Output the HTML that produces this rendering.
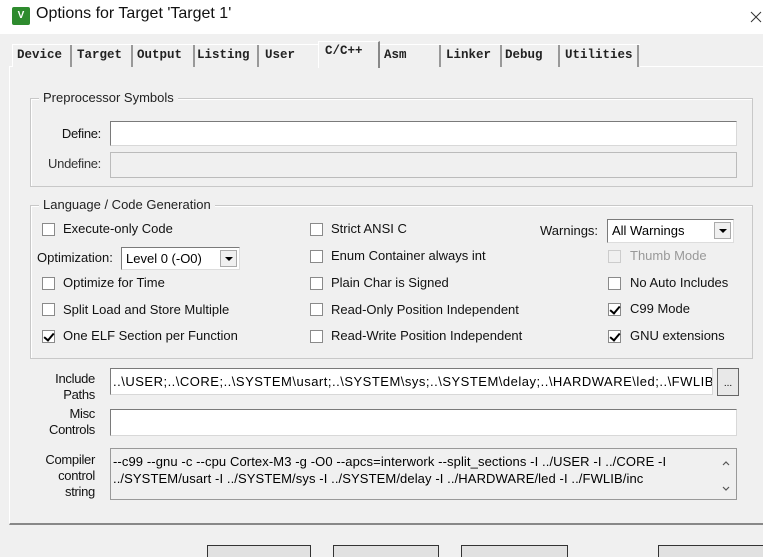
<!DOCTYPE html>
<html><head><style>
*{box-sizing:border-box;margin:0;padding:0}
body{width:763px;height:553px;background:#f0f0f0;position:relative;overflow:hidden;font-family:"Liberation Sans",Arial,sans-serif;font-size:13px;color:#000}
.a{position:absolute}
.tab{position:absolute;top:45px;height:22px;font-family:"Liberation Mono",monospace;font-size:12.5px;font-weight:bold;color:#222;padding-top:3px;border-right:2px solid #999}
.grp{position:absolute;border:1px solid #c8c8c8;box-shadow:inset 1px 1px 0 #fff}
.gl{position:absolute;background:#f0f0f0;padding:0 4px;top:-9px;left:8px;font-size:13px;color:#222}
.in{position:absolute;background:#fff;border:1px solid #7a7a7a;border-right-color:#d8d8d8;border-bottom-color:#d8d8d8}
.cb{position:absolute;width:13px;height:13px;background:#fff;border:1px solid #8a8a8a}
.cb.k::after{content:"";position:absolute;left:3px;top:0px;width:4px;height:8px;border:solid #000;border-width:0 2px 2px 0;transform:rotate(40deg)}
.t{position:absolute;font-size:13px;white-space:nowrap;color:#111}
.lbl{position:absolute;text-align:right;font-size:13px;line-height:16px;color:#111;letter-spacing:-0.3px}
.sel{position:absolute;background:#fff;border:1px solid #7a7a7a;border-right-color:#ddd;border-bottom-color:#ddd;font-size:13px;padding:3px 4px}
.arr{position:absolute;right:2px;top:2px;width:17px;height:17px;background:#f0f0f0;border:1px solid #aaa}
.arr::after{content:"";position:absolute;left:4px;top:6px;border-left:4px solid transparent;border-right:4px solid transparent;border-top:4px solid #000}
.btn{position:absolute;top:545px;height:12px;border:1px solid #333;border-bottom:none;background:#e1e1e1}
</style></head><body>
<div class="a" style="left:0;top:0;width:763px;height:34px;background:#fff"></div>
<div class="a" style="left:12px;top:7px;width:18px;height:18px;background:#2e8b2e;border-radius:2px;color:#fff;font-size:10px;font-weight:bold;text-align:center;line-height:18px">V</div>
<div class="a" style="left:36px;top:5px;font-size:16px;color:#111">Options for Target 'Target 1'</div>
<svg class="a" style="left:750px;top:11px" width="12" height="12"><path d="M1 1L11 11M11 1L1 11" stroke="#333" stroke-width="1"/></svg>

<div class="a" style="left:9px;top:66px;width:760px;height:459px;border-top:1px solid #fff;border-left:1px solid #fff;border-bottom:2px solid #888;background:#f0f0f0"></div>
<div class="a" style="left:12px;top:44px;width:628px;height:23px;border-left:1px solid #fff;border-top:1px solid #fff;background:#f0f0f0"></div>
<div class="tab" style="left:17px;width:55px">Device</div>
<div class="tab" style="left:77px;width:56px">Target</div>
<div class="tab" style="left:137px;width:58px">Output</div>
<div class="tab" style="left:197px;width:62px">Listing</div>
<div class="tab" style="left:265px;width:53px;border-right:none">User</div>
<div class="a" style="left:318px;top:41px;width:62px;height:27px;background:#f0f0f0;border-top:1px solid #fff;border-left:1px solid #fff;border-right:2px solid #888"></div>
<div class="a" style="left:325px;top:44px;font-family:'Liberation Mono',monospace;font-size:12.5px;font-weight:bold;color:#222">C/C++</div>
<div class="tab" style="left:384px;width:57px">Asm</div>
<div class="tab" style="left:446px;width:56px">Linker</div>
<div class="tab" style="left:505px;width:55px">Debug</div>
<div class="tab" style="left:565px;width:74px">Utilities</div>

<div class="grp" style="left:30px;top:98px;width:723px;height:89px"><div class="gl">Preprocessor Symbols</div></div>
<div class="lbl" style="left:30px;top:126px;width:71px">Define:</div>
<div class="in" style="left:110px;top:121px;width:627px;height:25px"></div>
<div class="lbl" style="left:30px;top:156px;width:71px;color:#333">Undefine:</div>
<div class="in" style="left:110px;top:152px;width:627px;height:26px;background:#f0f0f0;border-color:#bbb"></div>

<div class="grp" style="left:30px;top:205px;width:723px;height:154px"><div class="gl">Language / Code Generation</div></div>
<div class="cb" style="left:42px;top:223px"></div><div class="t" style="left:63px;top:221px">Execute-only Code</div>
<div class="t" style="left:37px;top:250px">Optimization:</div>
<div class="sel" style="left:121px;top:247px;width:119px;height:23px">Level 0 (-O0)<div class="arr"></div></div>
<div class="cb" style="left:42px;top:277px"></div><div class="t" style="left:63px;top:275px">Optimize for Time</div>
<div class="cb" style="left:42px;top:303px"></div><div class="t" style="left:63px;top:302px">Split Load and Store Multiple</div>
<div class="cb k" style="left:42px;top:330px"></div><div class="t" style="left:63px;top:328px">One ELF Section per Function</div>

<div class="cb" style="left:310px;top:223px"></div><div class="t" style="left:331px;top:221px">Strict ANSI C</div>
<div class="cb" style="left:310px;top:250px"></div><div class="t" style="left:331px;top:248px">Enum Container always int</div>
<div class="cb" style="left:310px;top:277px"></div><div class="t" style="left:331px;top:275px">Plain Char is Signed</div>
<div class="cb" style="left:310px;top:303px"></div><div class="t" style="left:331px;top:302px">Read-Only Position Independent</div>
<div class="cb" style="left:310px;top:330px"></div><div class="t" style="left:331px;top:328px">Read-Write Position Independent</div>

<div class="t" style="left:540px;top:223px">Warnings:</div>
<div class="sel" style="left:607px;top:219px;width:127px;height:24px">All Warnings<div class="arr"></div></div>
<div class="cb" style="left:608px;top:250px;border-color:#ccc;background:#f0f0f0"></div><div class="t" style="left:630px;top:248px;color:#999">Thumb Mode</div>
<div class="cb" style="left:608px;top:277px"></div><div class="t" style="left:630px;top:275px">No Auto Includes</div>
<div class="cb k" style="left:608px;top:303px"></div><div class="t" style="left:630px;top:301px">C99 Mode</div>
<div class="cb k" style="left:608px;top:330px"></div><div class="t" style="left:630px;top:328px">GNU extensions</div>

<div class="lbl" style="left:20px;top:371px;width:75px">Include<br>Paths</div>
<div class="in" style="left:110px;top:368px;width:603px;height:27px;padding:5px 2px;font-size:13px;letter-spacing:0.5px;white-space:nowrap;overflow:hidden">..\USER;..\CORE;..\SYSTEM\usart;..\SYSTEM\sys;..\SYSTEM\delay;..\HARDWARE\led;..\FWLIB</div>
<div class="a" style="left:717px;top:368px;width:22px;height:28px;border:1px solid #666;background:#e8e8e8;font-size:10px;text-align:center;line-height:30px">...</div>
<div class="lbl" style="left:20px;top:406px;width:75px">Misc<br>Controls</div>
<div class="in" style="left:110px;top:409px;width:627px;height:27px"></div>
<div class="lbl" style="left:20px;top:452px;width:75px">Compiler<br>control<br>string</div>
<div class="in" style="left:110px;top:448px;width:627px;height:52px;background:#f0f0f0;border-color:#999;padding:4px 2px;font-size:13px;letter-spacing:0.1px;line-height:17px;white-space:nowrap;overflow:hidden">--c99 --gnu -c --cpu Cortex-M3 -g -O0 --apcs=interwork --split_sections -I ../USER -I ../CORE -I<br>../SYSTEM/usart -I ../SYSTEM/sys -I ../SYSTEM/delay -I ../HARDWARE/led -I ../FWLIB/inc</div>
<div class="a" style="left:718px;top:449px;width:18px;height:50px;background:#f0f0f0"></div>
<svg class="a" style="left:721px;top:459px" width="10" height="36"><path d="M2 6L5 3L8 6M2 28L5 31L8 28" stroke="#555" fill="none" stroke-width="1.2"/></svg>

<div class="btn" style="left:207px;width:104px"></div>
<div class="btn" style="left:333px;width:106px"></div>
<div class="btn" style="left:461px;width:107px"></div>
<div class="btn" style="left:658px;width:106px"></div>
</body></html>
